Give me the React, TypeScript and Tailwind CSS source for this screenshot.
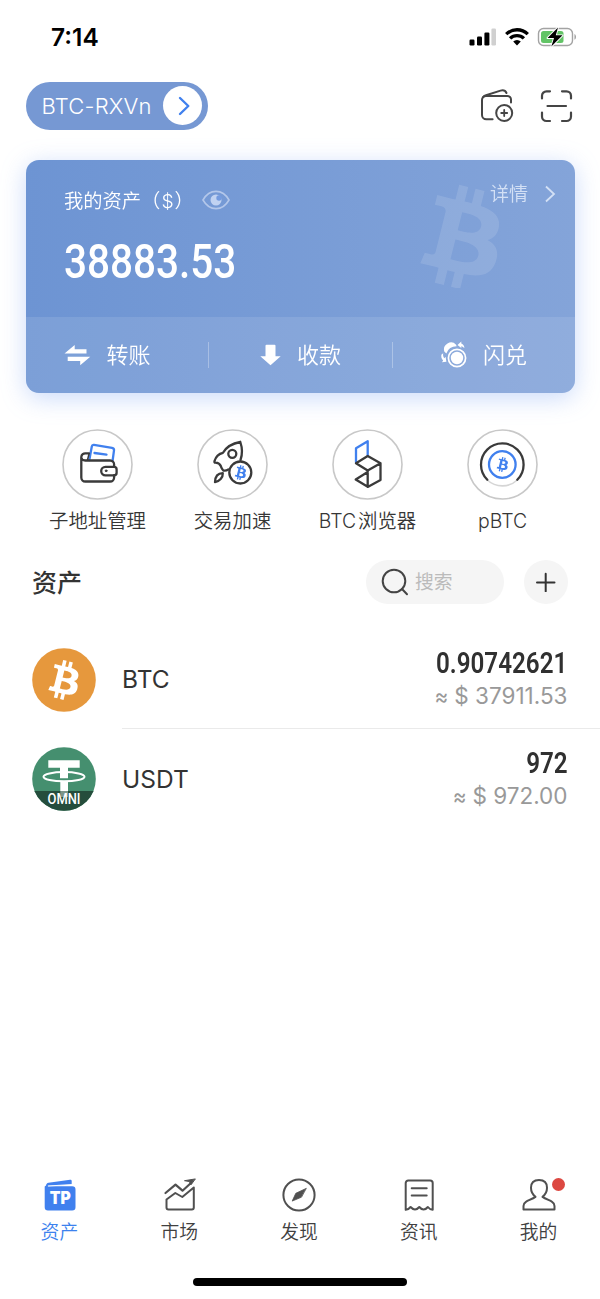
import React from 'react';

const BTC_PATH =
  'M23.189 14.02c.314-2.096-1.283-3.223-3.465-3.975l.708-2.84-1.728-.43-.69 2.765c-.454-.114-.92-.22-1.385-.326l.695-2.783L15.596 6l-.708 2.839c-.376-.086-.746-.17-1.104-.26l.002-.009-2.384-.595-.46 1.846s1.283.294 1.256.312c.7.175.826.638.805 1.006l-.806 3.235c.048.012.11.03.18.057l-.183-.045-1.13 4.532c-.086.212-.303.531-.793.41.018.025-1.256-.313-1.256-.313l-.858 1.978 2.25.561c.418.105.828.215 1.231.318l-.715 2.872 1.727.43.708-2.84c.472.127.93.245 1.378.357l-.706 2.828 1.728.43.715-2.866c2.948.558 5.164.333 6.097-2.333.752-2.146-.037-3.385-1.588-4.192 1.13-.26 1.98-1.003 2.207-2.538zm-3.95 5.538c-.533 2.147-4.148.986-5.32.695l.95-3.805c1.172.293 4.929.872 4.37 3.11zm.535-5.569c-.487 1.953-3.495.96-4.47.717l.86-3.45c.975.243 4.118.696 3.61 2.733z';

const StatusBar: React.FC = () => (
  <div className="flex h-[81.5px] items-start justify-between pl-[51px] pr-[23px] pt-[24px]">
    <span className="text-[24.5px] leading-[26px] font-semibold text-black">7:14</span>
    <div className="flex items-center pt-[2px]">
      <svg width="28" height="20" viewBox="0 0 28 20">
        <rect x="1.5" y="12.5" width="5" height="6" rx="1.2" />
        <rect x="9" y="9.5" width="5" height="9" rx="1.2" />
        <rect x="16.4" y="5.5" width="5" height="13" rx="1.2" />
        <rect x="23.4" y="1.500" width="4.600" height="17" rx="1.200" fill="#d0d0d0" />
      </svg>
      <svg className="ml-[9px]" width="24" height="20" viewBox="0 0 24 20" fill="none" stroke="#000" strokeWidth="3.300">
        <path d="M1.200 7.200a15.300 15.300 0 0 1 21.600 0" />
        <path d="M5.100 11.400a9.800 9.800 0 0 1 13.800 0" />
        <path d="M8.200 14.600a5.400 5.400 0 0 1 7.600 0L12 18.600z" fill="#000" stroke="none" />
      </svg>
      <svg className="ml-[8px]" width="40" height="22" viewBox="0 0 40 22">
        <rect x="1.500" y="2.500" width="34" height="17" rx="5" fill="#fff" stroke="#a3a3a3" strokeWidth="1.400" />
        <rect x="4" y="5" width="22.500" height="12" rx="2.500" fill="#62c466" />
        <path d="M37.500 8c1.900.8 1.900 5 0 5.800z" fill="#999" />
        <path d="M21 1.500 10.500 12H17L14.300 20.500 25.500 9.300H18.800z" fill="#000" stroke="#fff" strokeWidth="1.800" paintOrder="stroke" strokeLinejoin="round" />
      </svg>
    </div>
  </div>
);

const Header: React.FC = () => (
  <div className="flex h-[48px] items-center justify-between pl-[25.5px] pr-[27px]">
    <button className="flex h-[48px] w-[182.500px] items-center justify-between rounded-full bg-[#7698d3] pl-[16px] pr-[6px] text-white">
      <span className="text-[22px] leading-[30px] font-light tracking-[0.200px] whitespace-nowrap">BTC-RXVn</span>
      <span className="flex size-[39px] items-center justify-center rounded-full bg-white">
        <svg width="16" height="22" viewBox="0 0 16 22" fill="none" stroke="#4080ee" strokeWidth="2.400" strokeLinecap="round" strokeLinejoin="round">
          <path d="m5 3 8.300 8L5 19" />
        </svg>
      </span>
    </button>
    <div className="flex items-center gap-[26px]">
      <svg width="34" height="36" viewBox="0 0 34 36" fill="none" stroke="#454545" strokeWidth="2" strokeLinecap="round">
        <path d="M12.600 31.300H6.300A4.300 4.300 0 0 1 2 27V12a4 4 0 0 1 4-4h21.500a3.500 3.500 0 0 1 3.500 3.500v3" />
        <path d="M3 9.200c1-1 1.700-1.500 3-1.900l14.500-4.700c3-.9 4.800-.2 6 2.400" />
        <circle cx="24.200" cy="25" r="8" />
        <path d="M21.200 25h6M24.200 22v6" strokeWidth="1.800" />
      </svg>
      <svg width="33" height="34" viewBox="0 0 33 34" fill="none" stroke="#454545" strokeWidth="2.200" strokeLinecap="round">
        <path d="M2 9.500V6.800a4.500 4.500 0 0 1 4.500-4.500H10M22 2.300h4.500A4.500 4.500 0 0 1 31 6.800v2.700M31 23.500v4a4.500 4.500 0 0 1-4.500 4.500H22M10 32H6.500A4.500 4.500 0 0 1 2 27.500v-4M7.500 17h18.500" />
      </svg>
    </div>
  </div>
);

const AssetCard: React.FC = () => (
  <div className="relative mx-[25.500px] flex h-[233px] flex-col overflow-hidden rounded-[13px] bg-linear-to-r from-[#6d94d3] to-[#84a4d9] text-white">
    <svg className="absolute left-[394px] top-[23.500px]" width="79" height="104" viewBox="8.100 6 15.100 19.600" fill="#fff" fillOpacity="0.120">
      <path d={BTC_PATH} />
    </svg>
    <div className="flex h-[156.500px] shrink-0 justify-between">
      <div className="pl-[38.500px] pt-[26px]">
        <div className="flex h-[28px] items-center">
          <span className="w-[138px] pt-[1px] text-[19.300px] leading-[28px] font-[350] whitespace-nowrap">
            我的资产（<span className="ml-[1px]">$</span><span className="ml-[1px]">）</span>
          </span>
          <svg width="28" height="20" viewBox="0 0 28 20" fill="none">
            <path d="M1 10C7.500-1.500 20.500-1.500 27 10 20.500 21.500 7.500 21.500 1 10z" stroke="#b3c7ea" strokeWidth="1.600" />
            <circle cx="14" cy="10" r="5.500" fill="#c0d2f1" />
            <circle cx="17" cy="8" r="2.700" fill="#749bdf" />
          </svg>
        </div>
        <div className="origin-left scale-x-[0.835] pt-[20px] font-['Roboto'] text-[48.500px] leading-[56px] font-medium">38883.53</div>
      </div>
      <div className="mt-[20px] flex h-[28px] items-center pr-[18.500px] text-[#d3e0f5]">
        <span className="pt-[2px] text-[19px] leading-[28px] font-[350]">详情</span>
        <svg className="ml-[16px]" width="12" height="18" viewBox="0 0 12 18" fill="none" stroke="currentColor" strokeWidth="1.800">
          <path d="m2 1.500 8 7.500-8 7.500" />
        </svg>
      </div>
    </div>
    <div className="flex flex-1 items-center bg-white/10 text-[22px] leading-[32px] font-[350]">
      <div className="flex w-[182px] items-center gap-[16px] pl-[38px]">
        <svg width="27" height="22" viewBox="0 0 27 22" fill="#fff">
          <path d="M.5 9.500 10.700 1v4.200h11.800v4.300zM26.300 12.700H3.700V17h12.500v4.200z" />
        </svg>
        <span className="pt-[1px]">转账</span>
      </div>
      <div className="h-[26px] w-px bg-white/30" />
      <div className="flex w-[183px] items-center justify-center gap-[16px] pl-[1px]">
        <svg width="21" height="22" viewBox="0 0 21 22" fill="#fff">
          <path d="M6.500.8h8a1 1 0 0 1 1 1v10.400h5.200L10.500 21.200.3 12.200h5.200V1.800a1 1 0 0 1 1-1z" />
        </svg>
        <span className="pt-[1px]">收款</span>
      </div>
      <div className="h-[26px] w-px bg-white/30" />
      <div className="flex flex-1 items-center justify-end gap-[16px] pr-[47.500px]">
        <svg width="26" height="27" viewBox="0 0 26 27" fill="#fff">
          <path d="M3.300 10.500a7 7 0 0 1 11.800-6.800l.5 1.600A11 11 0 0 0 5.300 12.500z" />
          <circle cx="16" cy="17" r="8.600" fill="none" stroke="#fff" strokeWidth="1.700" />
          <circle cx="16" cy="17" r="6.200" />
          <path d="M20.300.5v2c2 .8 3 2.300 3.100 4.800-1-1.200-1.900-1.800-3.100-2v1.800L16.500 3.900zM2.200 12.200c-.4 2.200 0 3.600 1.200 5l1.200-1.400.8 4.900-4.500.5 1.300-1.600C.2 17.500 0 15.200.500 13.500z" />
        </svg>
        <span className="pt-[1px]">闪兑</span>
      </div>
    </div>
  </div>
);

const icons: Record<string, React.ReactNode> = {
  wallet: (
    <>
      <g stroke="#4080ee">
        <path d="m26.800 30.500 2.500-13.500c.2-1.200 1-1.800 2.200-1.600l18 2.900c1.500.3 2.200 1.200 2 2.500l-1.300 9.700" />
        <path d="m32 23.500 12 1.700" />
      </g>
      <path d="M26.500 23.800h-3.300a4 4 0 0 0-4.400 3.700V48a4 4 0 0 0 4 4h24.800a4 4 0 0 0 4-4v-2.300M18.800 28c.2 2 1.500 3 4 3h24.800a4 4 0 0 1 4 4v2.300" />
      <path d="M26.500 24.500 25 30.500" strokeWidth="1.500" />
      <path d="M51.500 37.300H43a4.300 4.300 0 0 0 0 8.600h8.500c1.500 0 2.600-1 2.600-2.600v-3.400c0-1.500-1-2.600-2.600-2.600z" />
      <circle cx="43.600" cy="41.300" r="0.900" fill="#3a3a3a" strokeWidth="1" />
    </>
  ),
  rocket: (
    <>
      <path d="M42.800 12.500c-8 1.400-14 5-17.300 10.800-4 .8-7.200 3.800-8.500 8.300-.3 1 .1 1.500 1 1.600 3 .2 4.500 1.300 5.300 3.300.6 1.700 1 3 2.500 4.500 1.800.3 3.500 0 5-1M42.800 12.500c2 5.800 2.400 11.800.2 18" />
      <circle cx="34.800" cy="24.300" r="4" />
      <path d="M25.300 43.700c-5 0-7.600 3-7.800 9 4.600-.9 8-4.500 7.800-9z" />
      <circle cx="42.800" cy="43" r="11" />
      <path d={BTC_PATH} transform="translate(31.100 31.100) scale(.75)" fill="#4080ee" stroke="none" />
    </>
  ),
  explorer: (
    <>
      <path d="M23.500 33V18.700l11.700-7V26" stroke="#4080ee" />
      <path d="m23.500 33.700 11.700-7.300 12.800 7.300-12.800 7.300zM48 33.700v16.700l-12.800 7V41M35.200 57.300 23.200 50l12-7.500" />
    </>
  ),
  pbtc: (
    <>
      <path d="M19.800 50.500a22 22 0 0 0 30 0" stroke="#d5d5d5" strokeWidth="1.600" />
      <path d="M19.800 50.300a21.300 21.300 0 1 1 30 0" />
      <circle cx="34.800" cy="35" r="13.300" stroke="#4080ee" />
      <path d={BTC_PATH} transform="translate(23 23) scale(.75)" fill="#4080ee" stroke="none" />
    </>
  ),
};

const Feature: React.FC<{ icon: string; title: React.ReactNode }> = ({ icon, title }) => (
  <div className="flex w-[135px] flex-col items-center">
    <svg width="71" height="71" viewBox="-.5 -.5 71 71" fill="none" stroke="#3a3a3a" strokeWidth="2.300" strokeLinecap="round" strokeLinejoin="round">
      <circle cx="35" cy="35" r="34.500" stroke="#c8c8c8" strokeWidth="1.600" />
      {icons[icon]}
    </svg>
    <span className="mt-[7px] text-[19.400px] leading-[28px] font-[350] whitespace-nowrap text-[#363636]">{title}</span>
  </div>
);

const AssetRow: React.FC<{ logo: React.ReactNode; name: string; amount: string; value: string; last?: boolean }> = ({ logo, name, amount, value, last }) => (
  <div className="flex h-[99px] items-center pl-[32px]">
    {logo}
    <div className={`ml-[26px] flex h-full flex-1 items-center justify-between pr-[32.500px] ${last ? '' : 'border-b border-[#eaeaea]'}`}>
      <span className="text-[24.500px] leading-[32px] text-[#333]">{name}</span>
      <div className="flex flex-col items-end pt-[1px]">
        <span className="origin-right scale-x-[0.835] font-['Roboto'] text-[29px] leading-[34px] font-semibold text-[#303030]">{amount}</span>
        <span className="text-[22.500px] leading-[32px] text-[#999]"><span className="text-[21px]">≈ </span>{value}</span>
      </div>
    </div>
  </div>
);

const BtcLogo: React.FC = () => (
  <svg width="64" height="64" viewBox="0 0 32 32">
    <circle cx="16" cy="16" r="15.900" fill="#e6983d" />
    <path d={BTC_PATH} fill="#fff" />
  </svg>
);

const UsdtLogo: React.FC = () => (
  <svg width="64" height="64" viewBox="0 0 64 64">
    <clipPath id="coin"><circle cx="32" cy="32" r="31.800" /></clipPath>
    <g clipPath="url(#coin)">
      <rect width="64" height="64" fill="#458f6f" />
      <path d="M16.300 13.200h31.400v7.500H36v10.500h-8V20.700H16.300zM28.300 35h7.700v16h-7.700z" fill="#fff" />
      <ellipse cx="32" cy="29.700" rx="20.500" ry="4.600" fill="none" stroke="#fff" strokeWidth="2" />
      <rect y="44" width="64" height="20" fill="#254d3c" />
      <path d="M28.300 44h7.700v6h-7.700z" fill="#7c9589" />
      <text x="32" y="56.800" textAnchor="middle" textLength="33" lengthAdjust="spacingAndGlyphs" fontFamily="Roboto" fontSize="15" fontWeight="500" fill="#fff">OMNI</text>
    </g>
  </svg>
);

const tabs = [
  {
    title: '资产',
    icon: (
      <>
        <path d="M3 7.500c.2-1.600 1-2.500 2.500-2.800L27 1.700c1-.1 1.700.4 1.700 1.400v2.300c0 .9-.5 1.300-1.300 1.400L5 7.800c-.4 0-.5.3-.1.400h24.300A3.300 3.300 0 0 1 32.500 11.500v17.700a3.300 3.300 0 0 1-3.300 3.300H5a3.300 3.300 0 0 1-3.300-3.300V8.500z" fill="#4080ee" stroke="none" />
        <path d="M5.500 8 28.500 6.500" stroke="#fff" strokeWidth="0.900" />
        <text x="17.200" y="26.300" textAnchor="middle" textLength="21" lengthAdjust="spacingAndGlyphs" fontFamily="Inter" fontSize="17.500" fontWeight="900" fill="#fff" stroke="none">TP</text>
      </>
    ),
  },
  {
    title: '市场',
    icon: (
      <>
        <path d="m2.500 15 10-8.300 7 6 9-8.200" strokeWidth="2.200" />
        <path d="M32 1 21.500 2.700l4.800.8 1.500 3z" fill="#505050" strokeWidth="1" />
        <path d="M3.500 21.500v8a2 2 0 0 0 2 2h23.300a2 2 0 0 0 2-2V9.500L19.300 19l-7-4z" />
      </>
    ),
  },
  {
    title: '发现',
    icon: (
      <>
        <circle cx="17" cy="17" r="15.600" />
        <path d="m24 10.500-10.200 4.800-3.600 7.800 9-3.800z" fill="#505050" strokeWidth="0.800" />
      </>
    ),
  },
  {
    title: '资讯',
    icon: (
      <>
        <path d="M3.700 31.800V5a2.500 2.500 0 0 1 2.500-2.500h22A2.500 2.500 0 0 1 30.700 5v26.800c-2.200-.3-3.600-1.200-4.800-2.800-1.300 1.600-2.700 2.500-4.300 2.500s-3-.9-4.300-2.500c-1.300 1.600-2.700 2.500-4.300 2.500S10 30.600 8.600 29c-1.300 1.600-2.700 2.500-4.900 2.800z" />
        <path d="M9.700 10.300h15M9.700 17.500h15" />
      </>
    ),
  },
  {
    title: '我的',
    icon: (
      <path d="M13.500 18.800c-2.800-2-4.500-5-4.500-9 0-5 3-7.800 8-7.800s8 2.800 8 7.800c0 4-1.700 7-4.500 9 3 2 7 3.500 9.600 5 1.700 1 2.400 2.200 2.400 4.200v3.500h-31V28c0-2 .7-3.200 2.400-4.200 2.600-1.500 6.600-3 9.600-5z" />
    ),
    dot: true,
  },
];

const TabBar: React.FC = () => (
  <nav className="flex h-[121.500px] w-[599px] shrink-0">
    {tabs.map((tab, i) => (
      <div key={tab.title} className={`flex flex-1 flex-col items-center ${i === 0 ? 'text-[#3c82ee]' : 'text-[#404040]'}`}>
        <div className="relative">
          <svg width="34" height="34" viewBox="0 0 34 34" fill="none" stroke="#505050" strokeWidth="2" strokeLinecap="round" strokeLinejoin="round">
            {tab.icon}
          </svg>
          {tab.dot && <span className="absolute -right-[9px] top-0 size-[13px] rounded-full bg-[#dc4841]" />}
        </div>
        <span className="mt-[7px] mr-[1px] text-[18.800px] leading-[28px] font-[350]">{tab.title}</span>
      </div>
    ))}
  </nav>
);

const App: React.FC = () => {
  return (
    <div className="flex h-[1299px] w-[600px] flex-col overflow-hidden bg-white font-['Inter','Noto_Sans_CJK_SC',sans-serif]">
      <StatusBar />
      <Header />
      <div className="mt-[30.500px] drop-shadow-[0_5px_12px_rgba(90,140,240,0.320)]">
        <AssetCard />
      </div>

      <div className="mt-[35.500px] flex pl-[30px]">
        <Feature icon="wallet" title="子地址管理" />
        <Feature icon="rocket" title="交易加速" />
        <Feature icon="explorer" title={<><span className="mr-[2px]">BTC</span>浏览器</>} />
        <Feature icon="pbtc" title="pBTC" />
      </div>

      <div className="mt-[25.500px] flex h-[44px] items-center pl-[32px] pr-[32px]">
        <h2 className="flex-1 pt-[2px] text-[25px] leading-[36px] font-medium text-[#333]">资产</h2>
        <div className="flex h-[44px] w-[138px] items-center gap-[6px] rounded-full bg-[#f5f5f5] pl-[15px] text-[#bbb]">
          <svg width="28" height="28" viewBox="0 0 28 28" fill="none" stroke="#444" strokeWidth="2" strokeLinecap="round">
            <circle cx="13" cy="13" r="11.300" />
            <path d="m21 21 5 5.300" />
          </svg>
          <span className="pt-[2px] text-[18.800px] leading-[28px]">搜索</span>
        </div>
        <button className="ml-[20px] flex size-[44px] items-center justify-center rounded-full bg-[#f5f5f5]">
          <svg width="20" height="20" viewBox="0 0 20 20" stroke="#333" strokeWidth="2" strokeLinecap="round">
            <path d="M1 10.500h17.500M9.700 1.800v17.500" />
          </svg>
        </button>
      </div>

      <div className="mt-[26px] flex-1">
        <AssetRow logo={<BtcLogo />} name="BTC" amount="0.90742621" value="$ 37911.53" />
        <AssetRow logo={<UsdtLogo />} name="USDT" amount="972" value="$ 972.00" last />
      </div>

      <TabBar />
      <div className="absolute left-[193px] top-[1278px] h-[8px] w-[214px] rounded-full bg-black" />
    </div>
  );
};

export default App;
